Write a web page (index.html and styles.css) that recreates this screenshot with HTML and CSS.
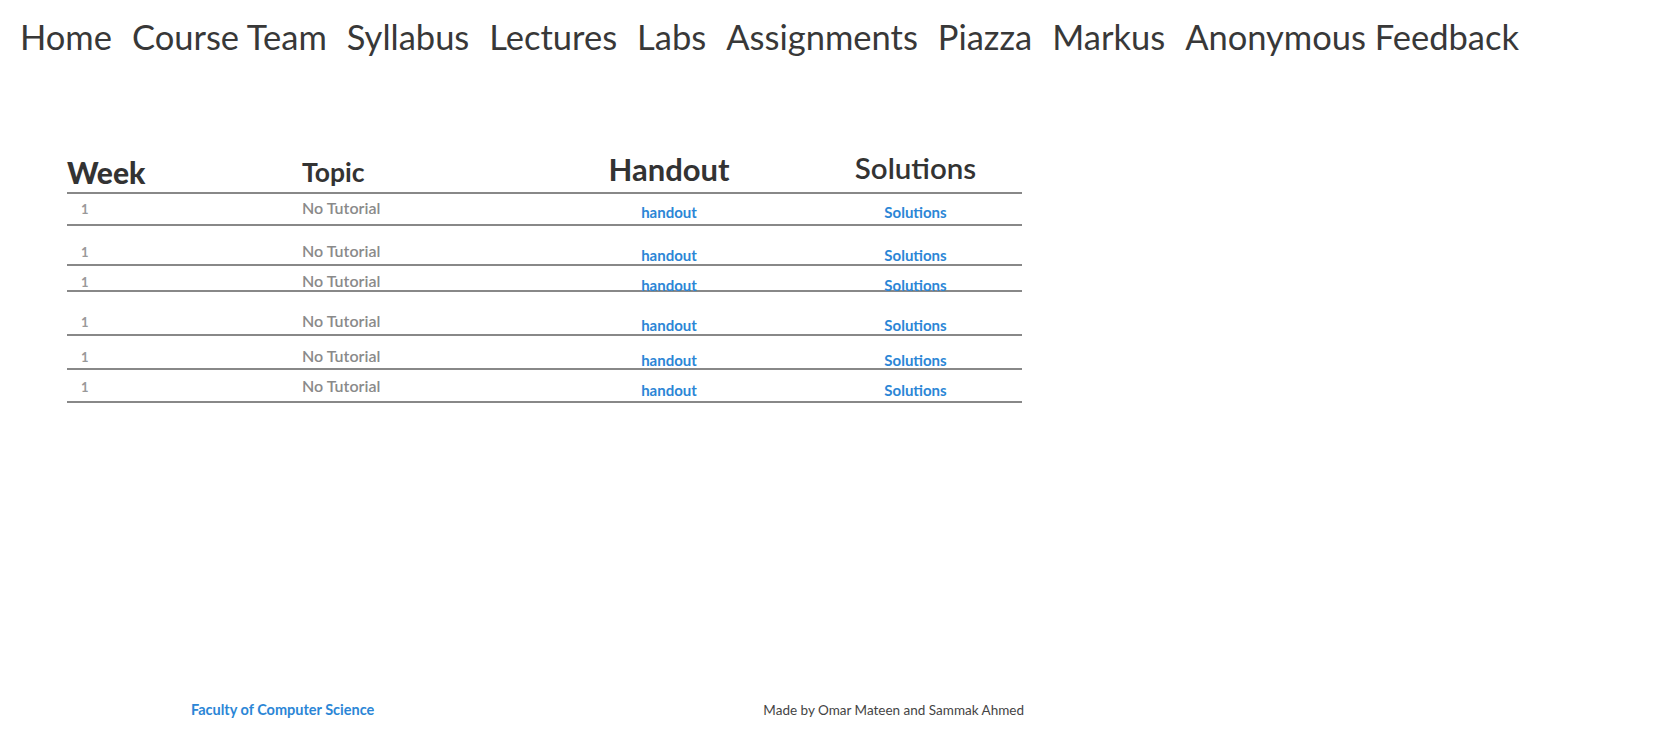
FILE: index.html
```html
<!DOCTYPE html>
<html lang="en">
<head>
<meta charset="utf-8">
<title>Tutorials</title>
<link rel="stylesheet" href="styles.css">
</head>
<body>
<div class="page">
  <nav class="nav">
    <a class="nav-link" href="#">Home</a>
    <a class="nav-link" href="#">Course Team</a>
    <a class="nav-link" href="#">Syllabus</a>
    <a class="nav-link" href="#">Lectures</a>
    <a class="nav-link" href="#">Labs</a>
    <a class="nav-link" href="#">Assignments</a>
    <a class="nav-link" href="#">Piazza</a>
    <a class="nav-link" href="#">Markus</a>
    <a class="nav-link" href="#">Anonymous Feedback</a>
  </nav>

  <section class="table">
    <div class="head">
      <div class="th th-week">Week</div>
      <div class="th th-topic">Topic</div>
      <div class="th th-handout">Handout</div>
      <div class="th th-sol">Solutions</div>
    </div>
    <div class="row r1">
      <div class="td td-week">1</div>
      <div class="td td-topic">No Tutorial</div>
      <div class="td td-link"><a href="#">handout</a></div>
      <div class="td td-link"><a href="#">Solutions</a></div>
    </div>
    <div class="row r2">
      <div class="td td-week">1</div>
      <div class="td td-topic">No Tutorial</div>
      <div class="td td-link"><a href="#">handout</a></div>
      <div class="td td-link"><a href="#">Solutions</a></div>
    </div>
    <div class="row r3">
      <div class="td td-week">1</div>
      <div class="td td-topic">No Tutorial</div>
      <div class="td td-link"><a href="#">handout</a></div>
      <div class="td td-link"><a href="#">Solutions</a></div>
    </div>
    <div class="row r4">
      <div class="td td-week">1</div>
      <div class="td td-topic">No Tutorial</div>
      <div class="td td-link"><a href="#">handout</a></div>
      <div class="td td-link"><a href="#">Solutions</a></div>
    </div>
    <div class="row r5">
      <div class="td td-week">1</div>
      <div class="td td-topic">No Tutorial</div>
      <div class="td td-link"><a href="#">handout</a></div>
      <div class="td td-link"><a href="#">Solutions</a></div>
    </div>
    <div class="row r6">
      <div class="td td-week">1</div>
      <div class="td td-topic">No Tutorial</div>
      <div class="td td-link"><a href="#">handout</a></div>
      <div class="td td-link"><a href="#">Solutions</a></div>
    </div>
  </section>

  <footer class="footer">
    <a class="footer-link" href="#">Faculty of Computer Science</a>
    <span class="footer-credit">Made by Omar Mateen and Sammak Ahmed</span>
  </footer>
</div>
</body>
</html>
```

FILE: styles.css
```css
* {
  box-sizing: border-box;
}

html, body {
  margin: 0;
  padding: 0;
  background: #ffffff;
}

body {
  font-family: Lato, "Open Sans", "Noto Sans", sans-serif;
  line-height: normal;
}

a {
  text-decoration: none;
}

.page {
  min-height: 739px;
  display: flex;
  flex-direction: column;
}

/* navigation */
.nav {
  display: flex;
  gap: 20px;
  padding: 16px 0 0 20px;
}

.nav-link {
  font-size: 34.5px;
  font-weight: 400;
  color: #383838;
}

/* table */
.table {
  width: 955px;
  margin: 94px 0 0 67px;
}

.head,
.row {
  display: grid;
  grid-template-columns: 235px 227px 280px 213px;
  border-bottom: 2px solid #888888;
}

.head {
  height: 43px;
  grid-template-rows: 41px;
  align-items: end;
}

.th {
  font-weight: 700;
  color: #333333;
  line-height: 1;
}

.th-week {
  font-size: 30px;
  font-weight: 900;
  padding-bottom: 5.5px;
}

.th-topic {
  font-size: 26.5px;
  padding-bottom: 7px;
}

.th-handout {
  font-size: 31px;
  text-align: center;
  padding-bottom: 7.5px;
}

.th-sol {
  font-size: 29.5px;
  font-weight: 600;
  text-align: center;
  padding-bottom: 9.5px;
}

.row {
  align-items: start;
}

.r1 { height: 32px; padding-top: 4px; }
.r2 { height: 40px; padding-top: 15px; }
.r3 { height: 26px; padding-top: 5px; }
.r4 { height: 44px; padding-top: 19px; }
.r5 { height: 34px; padding-top: 10px; }
.r6 { height: 33px; padding-top: 6px; }

.td-week {
  font-size: 13px;
  font-weight: 700;
  color: #999999;
  padding: 3px 0 0 14px;
}

.td-topic {
  font-size: 16px;
  font-weight: 600;
  color: #8a8a8a;
}

.td-link {
  text-align: center;
  padding-top: 5px;
  font-size: 15px;
  font-weight: 700;
}

.td-link a {
  color: #2b86d6;
}

/* footer */
.footer {
  margin-top: auto;
  display: flex;
  align-items: baseline;
  justify-content: space-between;
  width: 833px;
  margin-left: 191px;
  padding-bottom: 21px;
}

.footer-link {
  font-size: 14.5px;
  font-weight: 700;
  color: #2b86d6;
}

.footer-credit {
  font-size: 13.5px;
  color: #444444;
}
```
